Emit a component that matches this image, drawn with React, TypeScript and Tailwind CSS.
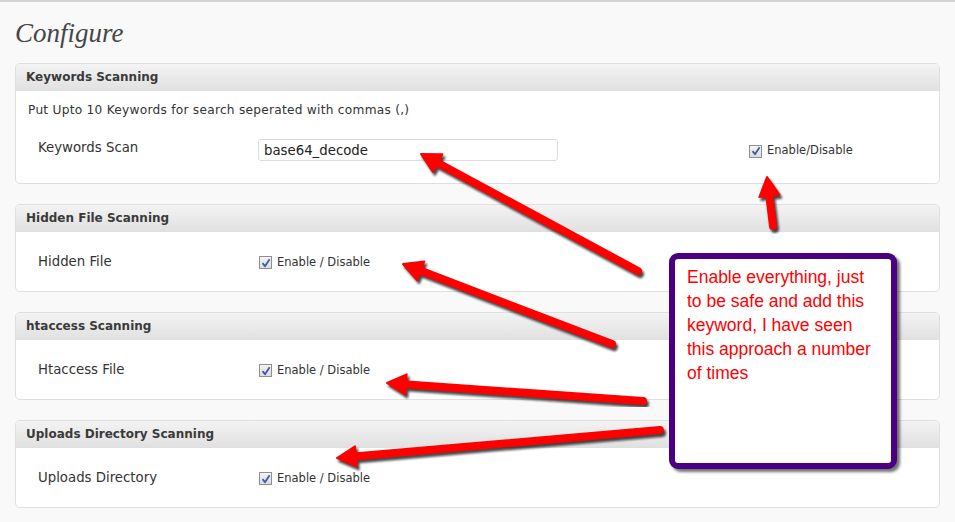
import React from "react"

const sans = { fontFamily: '"DejaVu Sans", Verdana, sans-serif' }

function Check() {
  return (
    <span className="inline-flex items-center justify-center w-[13px] h-[13px] border border-[#8f8f8f] bg-gradient-to-b from-[#f4f4f4] to-[#dcdcdc] shrink-0">
      <svg width="10" height="10" viewBox="0 0 10 10">
        <path d="M1.5 5.2 L4 8.2 L8.6 1.2" fill="none" stroke="#3b5bab" strokeWidth="1.8" strokeLinejoin="round" />
      </svg>
    </span>
  )
}

function Toggle({ label }: { label: string }) {
  return (
    <label className="flex items-center gap-[5px] text-[11.5px] text-[#333]">
      <Check />
      <span>{label}</span>
    </label>
  )
}

function Panel({ title, children }: { title: string; children: React.ReactNode }) {
  return (
    <div className="border border-[#dfdfdf] rounded-[5px] bg-white overflow-hidden">
      <div className="h-[27px] flex items-center pl-[10px] bg-gradient-to-b from-[#f3f3f3] to-[#e1e1e1] border-b border-[#dfdfdf] text-[12px] font-bold text-[#3a3a3a]">
        {title}
      </div>
      {children}
    </div>
  )
}

function Row({ label, children }: { label: string; children: React.ReactNode }) {
  return (
    <div className="h-[59px] flex items-center pl-[22px] pt-[2px]">
      <span className="w-[221px] text-[13.3px] text-[#333] -mt-[2px]">{label}</span>
      {children}
    </div>
  )
}

type Pt = [number, number]

function Arrow({ from, to }: { from: Pt; to: Pt }) {
  const dx = to[0] - from[0]
  const dy = to[1] - from[1]
  const len = Math.hypot(dx, dy)
  const ux = dx / len
  const uy = dy / len
  const headLen = 19
  const headW = 10
  const bx = to[0] - ux * headLen
  const by = to[1] - uy * headLen
  const px = -uy
  const py = ux
  const head = `${to[0]},${to[1]} ${bx + px * headW},${by + py * headW} ${bx - px * headW},${by - py * headW}`
  return (
    <g>
      <g transform="translate(2,3)" opacity="0.75" filter="url(#blur)">
        <line x1={from[0]} y1={from[1]} x2={bx + ux * 2} y2={by + uy * 2} stroke="#111" strokeWidth="8" strokeLinecap="round" />
        <polygon points={head} fill="#111" strokeLinejoin="round" stroke="#111" strokeWidth="2" />
      </g>
      <line x1={from[0]} y1={from[1]} x2={bx + ux * 2} y2={by + uy * 2} stroke="#ff0000" strokeWidth="8" strokeLinecap="round" />
      <polygon points={head} fill="#ff0000" stroke="#ff0000" strokeWidth="2" strokeLinejoin="round" />
    </g>
  )
}

export default function App() {
  return (
    <div className="relative w-[955px] h-[522px] overflow-hidden bg-[#f9f9f9] border-t-2 border-[#d4d4d4]" style={sans}>
      <div className="px-[15px]">
        <h1
          className="pt-[18px] h-[61px] text-[27px] italic text-[#464646] leading-none"
          style={{ fontFamily: '"Liberation Serif", Georgia, serif' }}
        >
          Configure
        </h1>

        <div className="flex flex-col gap-[20px]">
          <Panel title="Keywords Scanning">
            <div className="pt-[10px] pb-[22px]">
              <p className="pl-[12px] text-[12.2px] tracking-[0.25px] leading-[18px] text-[#333]">
                Put Upto 10 Keywords for search seperated with commas (,)
              </p>
              <div className="flex items-center pl-[22px] mt-[20px]">
                <span className="w-[220px] text-[13.3px] text-[#333] -mt-[4px]">Keywords Scan</span>
                <input
                  readOnly
                  value="base64_decode"
                  className="w-[300px] h-[22px] border border-[#dcdcdc] rounded-[3px] px-[5px] text-[13.3px] text-[#222] outline-none"
                  style={sans}
                />
                <div className="ml-[191px] mt-[2px]">
                  <Toggle label="Enable/Disable" />
                </div>
              </div>
            </div>
          </Panel>

          <Panel title="Hidden File Scanning">
            <Row label="Hidden File">
              <Toggle label="Enable / Disable" />
            </Row>
          </Panel>

          <Panel title="htaccess Scanning">
            <Row label="Htaccess File">
              <Toggle label="Enable / Disable" />
            </Row>
          </Panel>

          <Panel title="Uploads Directory Scanning">
            <Row label="Uploads Directory">
              <Toggle label="Enable / Disable" />
            </Row>
          </Panel>
        </div>
      </div>

      {/* annotation arrows */}
      <svg className="absolute inset-0 pointer-events-none" width="955" height="522">
        <defs>
          <filter id="blur" x="-10%" y="-10%" width="120%" height="120%">
            <feGaussianBlur stdDeviation="1.2" />
          </filter>
        </defs>
        <Arrow from={[638, 269]} to={[421, 152]} />
        <Arrow from={[773, 224]} to={[767, 175]} />
        <Arrow from={[612, 342]} to={[403, 262]} />
        <Arrow from={[643, 399]} to={[387, 381]} />
        <Arrow from={[660, 428]} to={[337, 456]} />
      </svg>

      {/* callout */}
      <div className="absolute left-[669px] top-[251px] w-[228px] h-[216px] border-[6px] border-[#4b0082] rounded-[9px] bg-white shadow-[3px_3px_3px_rgba(0,0,0,0.55)]">
        <p
          className="pl-[12px] pt-[6px] text-[17.5px] leading-[24px] text-[#ff0000]"
          style={{ fontFamily: '"Liberation Sans", Arial, sans-serif' }}
        >
          Enable everything, just
          <br />
          to be safe and add this
          <br />
          keyword, I have seen
          <br />
          this approach a number
          <br />
          of times
        </p>
      </div>
    </div>
  )
}
